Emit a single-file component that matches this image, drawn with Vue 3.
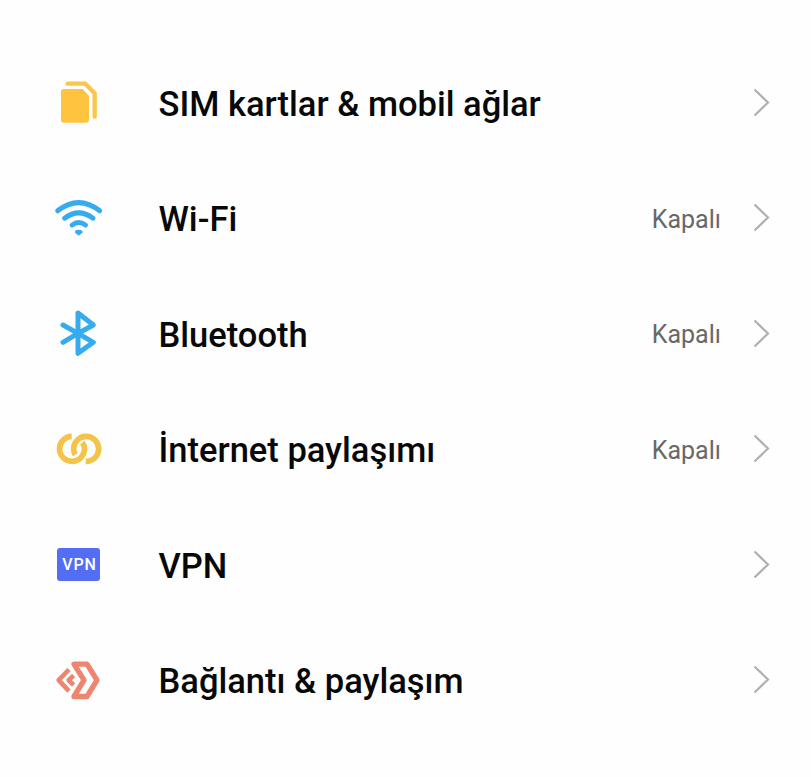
<script setup>
const rows = [
  { icon: 'sim', label: 'SIM kartlar & mobil ağlar' },
  { icon: 'wifi', label: 'Wi-Fi', value: 'Kapalı' },
  { icon: 'bluetooth', label: 'Bluetooth', value: 'Kapalı' },
  { icon: 'hotspot', label: 'İnternet paylaşımı', value: 'Kapalı' },
  { icon: 'vpn', label: 'VPN' },
  { icon: 'share', label: 'Bağlantı & paylaşım' },
]
</script>

<template>
  <main class="settings">
    <div v-for="row in rows" :key="row.icon" class="row">
      <span v-if="row.icon === 'vpn'" class="icon"><span class="vpn">VPN</span></span>
      <svg v-else class="icon" :class="row.icon" viewBox="0 0 210 195" fill="none" stroke-linecap="round" stroke-linejoin="round">
        <template v-if="row.icon === 'sim'">
          <path d="M56 57H113L132 77V149Q132 158 123 158H57Q48 158 48 149V65Q48 57 56 57Z" fill="#fec43e" />
          <path d="M68 41H121L149 70V140" stroke="#fcc64c" stroke-width="13" />
        </template>
        <g v-else-if="row.icon === 'wifi'" transform="translate(0 -1.5)">
          <path d="M38 76Q101 27 164 76" stroke="#36abf0" stroke-width="15" />
          <path d="M59 98Q101 66 144 98" stroke="#36abf0" stroke-width="15" />
          <path d="M81 119Q101 103 122 119" stroke="#36abf0" stroke-width="14" />
          <path d="M101 147L93 140Q93 136 101 136T110 140Z" fill="#36abf0" stroke="#36abf0" stroke-width="6" />
        </g>
        <path v-else-if="row.icon === 'bluetooth'" transform="translate(0 -1)" d="M54 73L99 98L145 125L99 158V37L145 73L99 98L54 125" stroke="#36abf0" stroke-width="15" />
        <g v-else-if="row.icon === 'hotspot'" transform="translate(0 -1.5)" stroke="#f4c44a" stroke-width="17" stroke-linecap="butt">
          <path d="M80 59.500A37.500 37.500 0 1 0 118.500 97Q118.500 87 112 78" />
          <path d="M122 134.500A37.500 37.500 0 1 0 86 97Q86 107 91 115" />
        </g>
        <g v-else transform="translate(0 -1.5)" stroke="#ee8570" stroke-width="16" stroke-linecap="butt" stroke-linejoin="round">
          <path d="M87 50H126L156 98L126 147H87L117 98Z" />
          <path d="M72 66L41 98L72 131" stroke-width="14" />
          <path d="M86 84L71 98L86 113" stroke-width="14" />
        </g>
      </svg>
      <span class="label">{{ row.label }}</span>
      <span v-if="row.value" class="value">{{ row.value }}</span>
      <svg class="chevron" viewBox="0 0 18 30" fill="none">
        <path d="M1.500 1.500L15 14.500L1.500 27.500" stroke="#b0b0b0" stroke-width="2.200" />
      </svg>
    </div>
  </main>
</template>

<style>
body {
  background: #fefefe;
}
</style>

<style scoped>
.settings {
  box-sizing: border-box;
  height: 777px;
  padding: 44.75px 40.5px 0 45px;
  overflow: hidden;
  font-family: Roboto, sans-serif;
}
.row {
  display: flex;
  align-items: center;
  height: 115.5px;
}
.icon {
  display: flex;
  align-items: center;
  flex: none;
  width: 70px;
  height: 65px;
  margin-right: 43.5px;
}
.vpn {
  width: 43px;
  height: 33px;
  margin-left: 12px;
  border-radius: 3px;
  background: #536ef5;
  color: #fff;
  font-size: 16px;
  font-weight: 500;
  line-height: 33px;
  letter-spacing: 0.9px;
  text-indent: 2px;
  text-align: center;
}
.label {
  flex: 1;
  padding-top: 2px;
  color: #080808;
  font-size: 34.5px;
  font-weight: 500;
  line-height: 44px;
  white-space: nowrap;
}
.value {
  padding-top: 3px;
  margin-right: 31.5px;
  color: #686868;
  font-size: 25px;
  line-height: 32px;
}
.chevron {
  flex: none;
  width: 18px;
  height: 30px;
}
</style>
